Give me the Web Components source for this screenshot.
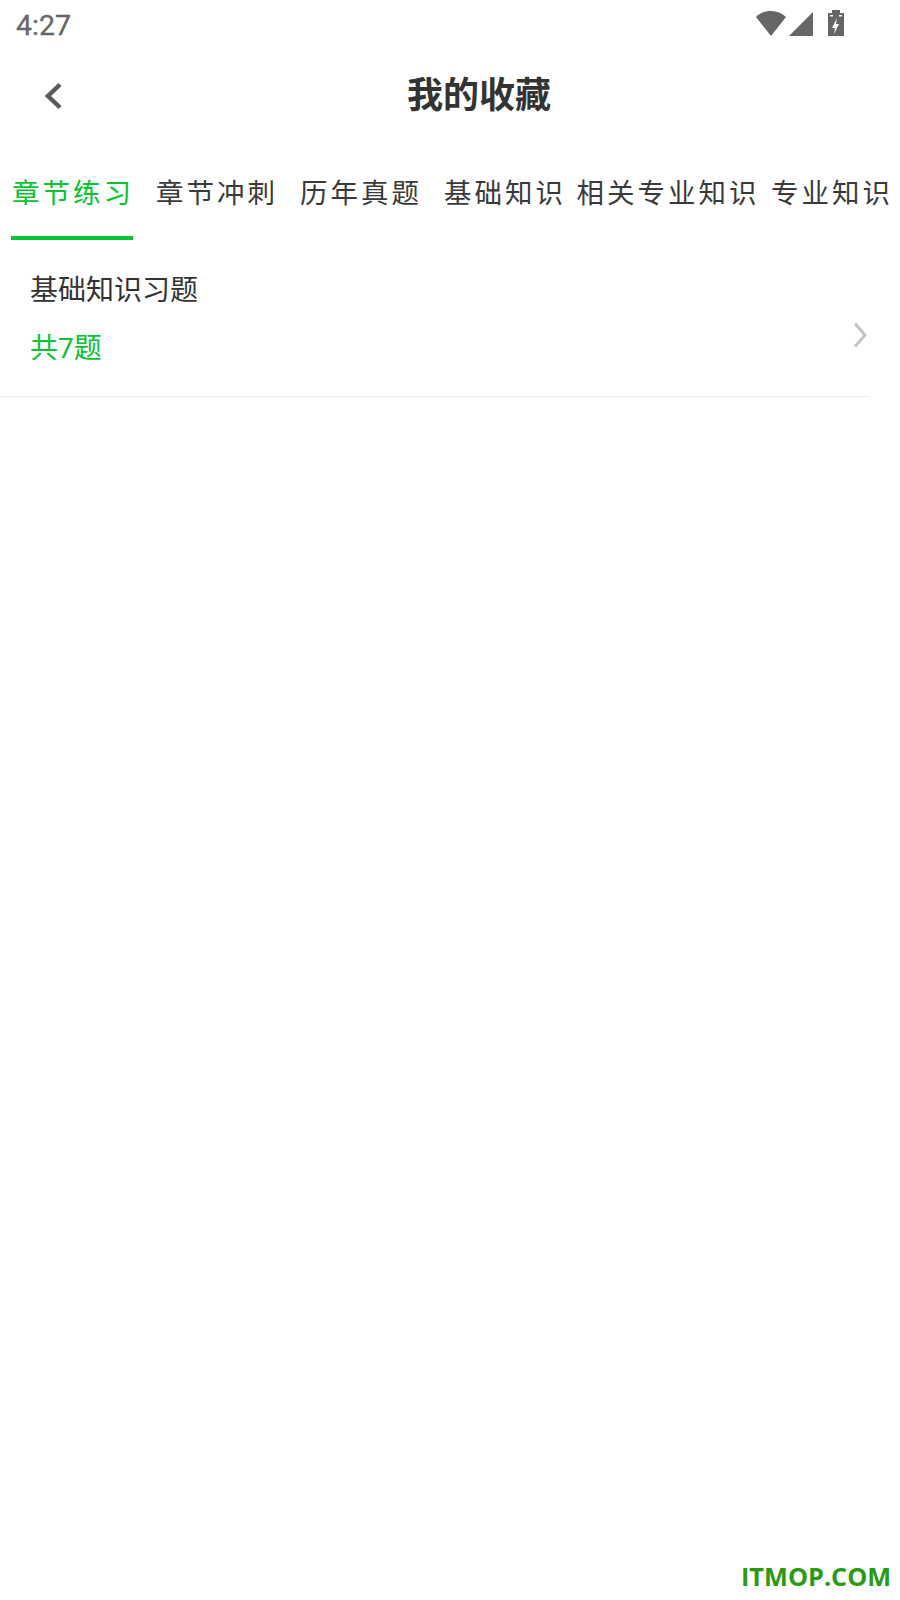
<!DOCTYPE html>
<html lang="zh"><head><meta charset="utf-8">
<style>html,body{margin:0;padding:0;background:#fff}body{width:900px;height:1600px;overflow:hidden;font-family:"Noto Sans CJK SC","Noto Sans",sans-serif}</style>
</head><body>
<app-page></app-page>
<template id="t-status"><style>
:host{display:flex;height:48px;box-sizing:border-box;padding:8px 0 0 16px;justify-content:space-between;align-items:flex-start;color:#666}
.time{font:400 28.500px/36px Roboto,sans-serif;-webkit-text-stroke:.3px #666}
svg{display:block;margin:2px 56px 0 0}
</style><span class="time">4:27</span>
<svg width="88" height="28" viewBox="0 0 88 28" fill="#666"><path d="M0 7C4 3 9 1 15 1S26 3 30 7L15 26z"/><path d="M57 2V26H33z"/><path d="M72 3H76V0H84V3H88V26H72z"/><path d="M81 8L76 18H79L78 24L83 14H80z" fill="#fff"/><path d="M74 5h3v1.500h-3zM83 5h3v1.500h-3z" fill="#fff"/></svg>
</template>
<template id="t-head"><style>
:host{display:block;position:relative;height:96px;text-align:center}
h1{margin:0;padding-left:58px;font:700 36px/88px "Noto Sans CJK SC",sans-serif;color:#333;letter-spacing:0}
svg{position:absolute;left:43px;top:34px}
</style><svg width="20" height="28" viewBox="0 0 20 28"><path d="M17 2.500L5 14L17 25.500" fill="none" stroke="#5a5a5a" stroke-width="4.500"/></svg><h1><slot></slot></h1>
</template>
<template id="t-tabs"><style>
:host{display:flex;height:96px;box-sizing:border-box;padding:0 0 0 11px}
</style><slot></slot>
</template>
<template id="t-tab"><style>
:host{display:block;flex:none;height:96px;box-sizing:border-box;padding-top:26px;font:27.500px/42px "Noto Sans CJK SC",sans-serif;letter-spacing:3px;color:#3a3a3a;white-space:nowrap;position:relative}
div{margin:0 -1px 0 1px}
:host([active]){color:#09c232}
:host([active])::after{content:"";position:absolute;left:0;right:0;top:92px;height:4px;background:#09c232}
</style><div><slot></slot></div>
</template>
<template id="t-item"><style>
:host{display:block;box-sizing:border-box;width:870px;height:157px;padding:26px 0 0 30px;border-bottom:1px solid #eee;position:relative}
.a{font:28px/44px "Noto Sans CJK SC",sans-serif;color:#333}
.b{font:28px/44px Roboto,"Noto Sans CJK SC",sans-serif;color:#09c232;margin-top:17px}
svg{position:absolute;left:852px;top:81px}
</style><div class="a"><slot name="title"></slot></div><div class="b"><slot name="count"></slot></div>
<svg width="16" height="28" viewBox="0 0 16 28"><path d="M3 2.500L13 14L3 25.500" fill="none" stroke="#c4c4c4" stroke-width="3"/></svg>
</template>
<template id="t-page"><style>
:host{display:block;position:relative;width:900px;height:1600px;background:#fff}
.wm{position:absolute;left:741px;top:1556px;font:700 25.300px/40px "Open Sans",sans-serif;color:#2a9a12;white-space:nowrap}
</style><status-bar></status-bar><title-bar>我的收藏</title-bar>
<tab-strip>
<tab-item active>章节练习</tab-item>
<tab-item style="margin-left:22px">章节冲刺</tab-item>
<tab-item style="margin-left:22px">历年真题</tab-item>
<tab-item style="margin-left:22px">基础知识</tab-item>
<tab-item style="margin-left:10.500px">相关专业知识</tab-item>
<tab-item style="margin-left:11.500px">专业知识</tab-item>
</tab-strip>
<list-item><span slot="title">基础知识习题</span><span slot="count">共7题</span></list-item>
<div class="wm">ITMOP.COM</div>
</template>
<script>
function def(name,tid){customElements.define(name,class extends HTMLElement{constructor(){super();this.attachShadow({mode:'open'}).appendChild(document.getElementById(tid).content.cloneNode(true));}});}
def('status-bar','t-status');def('title-bar','t-head');def('tab-strip','t-tabs');def('tab-item','t-tab');def('list-item','t-item');def('app-page','t-page');
</script>
</body></html>
